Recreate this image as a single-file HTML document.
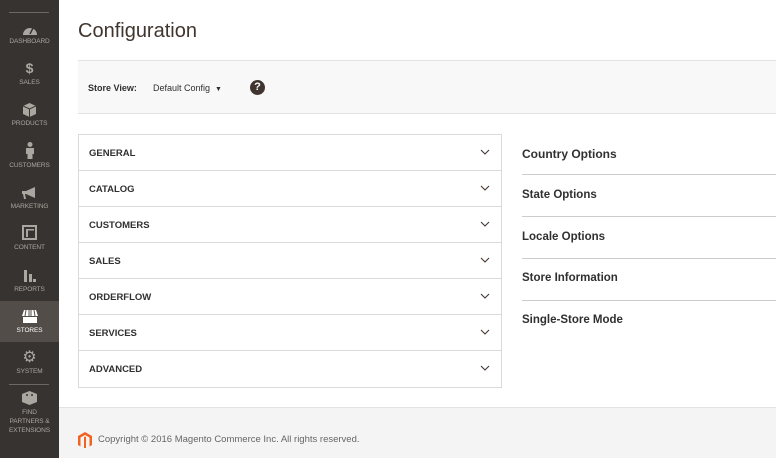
<!DOCTYPE html>
<html><head><style>
*{margin:0;padding:0;box-sizing:border-box}
body{width:776px;height:458px;overflow:hidden;font-family:"Liberation Sans",sans-serif;background:#fff;position:relative;color:#303030}
.sb{position:absolute;left:0;top:0;width:59px;height:458px;background:#373330}
.hr{position:absolute;left:9px;width:40px;height:1px;background:#6e6863}
.it{position:absolute;left:0;width:59px;text-align:center;color:#aaa6a0;font-size:6.5px;letter-spacing:-0.1px}
.ic{position:absolute;left:0;width:59px;text-align:center;color:#aaa6a0}
.act{position:absolute;left:0;top:301px;width:59px;height:41px;background:#524d49}
h1{position:absolute;left:78px;top:20px;font-size:20px;font-weight:normal;color:#41362f}
.bar{position:absolute;left:78px;top:60px;width:698px;height:54px;background:#f8f8f8;border-top:1px solid #e3e3e3;border-bottom:1px solid #e3e3e3}
.panel{position:absolute;left:78px;top:134px;width:424px;height:254px;border:1px solid #dadada}
.row{height:36px;border-bottom:1px solid #dadada;position:relative;font-size:9.5px;font-weight:bold;padding-left:10px;line-height:37px;color:#303030}
.row:last-child{border-bottom:0}
.row svg{position:absolute;right:11px;top:14px}
.rl{position:absolute;left:522px;width:254px;font-size:11.5px;font-weight:bold;color:#303030}
.sep{position:absolute;left:522px;width:254px;height:1px;background:#cccccc}
.ft{position:absolute;left:59px;top:407px;width:717px;height:51px;background:#f4f4f4;border-top:1px solid #e3e3e3}
</style></head><body>
<div class="sb">
<div class="hr" style="top:12px"></div>
<div class="act"></div>
<div class="ic" style="top:23px"><svg width="16" height="12" viewBox="0 0 16 12"><path d="M1 11A7 7 0 0 1 15 11Z" fill="#aaa6a0"/><path d="M8 10L11 4" stroke="#373330" stroke-width="1.5"/></svg></div>
<div class="it" style="top:38px">DASHBOARD</div>
<div class="ic" style="top:60px;font-size:14px;font-weight:bold">$</div>
<div class="it" style="top:79px">SALES</div>
<div class="ic" style="top:103px"><svg width="13" height="14" viewBox="0 0 13 14"><path d="M6.5 0L13 3V11L6.5 14L0 11V3Z" fill="#aaa6a0"/><path d="M0 3L6.5 6L13 3M6.5 6V14" stroke="#373330" stroke-width="1" fill="none"/></svg></div>
<div class="it" style="top:120px">PRODUCTS</div>
<div class="ic" style="top:142px"><svg width="8" height="17" viewBox="0 0 8 17"><circle cx="4" cy="2.5" r="2.5" fill="#aaa6a0"/><path d="M0 6H8V12H6.5V17H1.5V12H0Z" fill="#aaa6a0"/></svg></div>
<div class="it" style="top:162px">CUSTOMERS</div>
<div class="ic" style="top:186px"><svg width="15" height="12" viewBox="0 0 15 12"><path d="M0 4H4L13 0V11L4 7H3L4 12H2L1 7H0Z" fill="#aaa6a0"/></svg></div>
<div class="it" style="top:203px">MARKETING</div>
<div class="ic" style="top:225px"><svg width="15" height="15" viewBox="0 0 15 15"><rect x="1" y="1" width="13" height="13" fill="none" stroke="#aaa6a0" stroke-width="2"/><rect x="4" y="5" width="2" height="7" fill="#aaa6a0"/><rect x="4" y="4" width="8" height="1.5" fill="#aaa6a0"/></svg></div>
<div class="it" style="top:244px">CONTENT</div>
<div class="ic" style="top:268px"><svg width="13" height="14" viewBox="0 0 13 14"><rect x="1" y="2" width="3" height="12" fill="#aaa6a0"/><rect x="6" y="6" width="3" height="8" fill="#aaa6a0"/><rect x="10" y="11" width="3" height="3" fill="#aaa6a0"/></svg></div>
<div class="it" style="top:286px">REPORTS</div>
<div class="ic" style="top:310px"><svg width="16" height="13" viewBox="0 0 16 13"><path d="M2 0H14L16 6H0Z" fill="#fff"/><path d="M4 0L3 6M7 0V6M9 0V6M12 0L13 6" stroke="#524d49" stroke-width="1"/><rect x="1" y="7" width="14" height="6" fill="#fff"/></svg></div>
<div class="it" style="top:327px;color:#fff">STORES</div>
<div class="ic" style="top:350px;font-size:16px;line-height:16px">&#9881;</div>
<div class="it" style="top:368px">SYSTEM</div>
<div class="hr" style="top:384px"></div>
<div class="ic" style="top:391px"><svg width="15" height="14" viewBox="0 0 15 14"><path d="M7.5 0L15 3V11L7.5 14L0 11V3Z" fill="#aaa6a0"/><circle cx="5" cy="4" r="1" fill="#373330"/><circle cx="10" cy="4" r="1" fill="#373330"/></svg></div>
<div class="it" style="top:409px">FIND</div>
<div class="it" style="top:418px">PARTNERS &amp;</div>
<div class="it" style="top:427px">EXTENSIONS</div>
</div>
<h1>Configuration</h1>
<div class="bar">
<div style="position:absolute;left:10px;top:22px;font-size:9px;font-weight:bold">Store View:</div>
<div style="position:absolute;left:75px;top:22px;font-size:9px">Default Config &nbsp;<span style="font-size:7px">&#9660;</span></div>
<div style="position:absolute;left:172px;top:19px;width:15px;height:15px;border-radius:50%;background:#41362f;color:#fff;font-size:11px;font-weight:bold;text-align:center;line-height:15px">?</div>
</div>
<div class="panel">
<div class="row">GENERAL<svg width="10" height="6"><path d="M1 1L5 5L9 1" stroke="#41362f" stroke-width="1.1" fill="none"/></svg></div>
<div class="row">CATALOG<svg width="10" height="6"><path d="M1 1L5 5L9 1" stroke="#41362f" stroke-width="1.1" fill="none"/></svg></div>
<div class="row">CUSTOMERS<svg width="10" height="6"><path d="M1 1L5 5L9 1" stroke="#41362f" stroke-width="1.1" fill="none"/></svg></div>
<div class="row">SALES<svg width="10" height="6"><path d="M1 1L5 5L9 1" stroke="#41362f" stroke-width="1.1" fill="none"/></svg></div>
<div class="row">ORDERFLOW<svg width="10" height="6"><path d="M1 1L5 5L9 1" stroke="#41362f" stroke-width="1.1" fill="none"/></svg></div>
<div class="row">SERVICES<svg width="10" height="6"><path d="M1 1L5 5L9 1" stroke="#41362f" stroke-width="1.1" fill="none"/></svg></div>
<div class="row">ADVANCED<svg width="10" height="6"><path d="M1 1L5 5L9 1" stroke="#41362f" stroke-width="1.1" fill="none"/></svg></div>
</div>
<div class="rl" style="top:147px;font-size:12px">Country Options</div>
<div class="sep" style="top:174px"></div>
<div class="rl" style="top:189px">State Options</div>
<div class="sep" style="top:216px"></div>
<div class="rl" style="top:231px">Locale Options</div>
<div class="sep" style="top:258px"></div>
<div class="rl" style="top:272px">Store Information</div>
<div class="sep" style="top:300px"></div>
<div class="rl" style="top:314px">Single-Store Mode</div>
<div class="ft">
<svg style="position:absolute;left:19px;top:24px" width="14" height="16" viewBox="0 0 14 16"><path d="M7 0L14 4V13L11.5 14.5V5.5L7 3L2.5 5.5V14.5L0 13V4Z" fill="#f26322"/><path d="M6 5V16L7 16.5L8 16V5L7 4.5Z" fill="#f26322"/></svg>
<div style="position:absolute;left:39px;top:26px;font-size:9.5px;color:#666">Copyright © 2016 Magento Commerce Inc. All rights reserved.</div>
</div>
</body></html>
